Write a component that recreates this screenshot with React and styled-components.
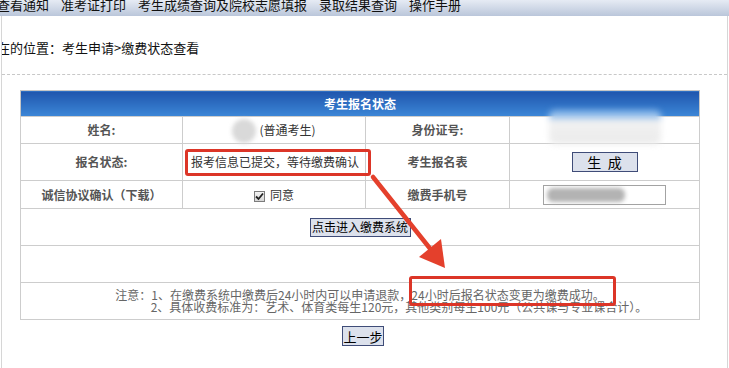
import React from "react";
import styled, { createGlobalStyle } from "styled-components";

const Global = createGlobalStyle`
  body {
    margin: 0;
    background: #fff;
    font-family: "Noto Sans CJK SC", "Noto Sans", sans-serif;
  }
`;

const Nav = styled.div`
  height: 16px;
  background: linear-gradient(#e6ebf4, #bac6da);
  display: flex;
  align-items: flex-end;
  gap: 12px;
  overflow: hidden;
  padding: 0 0 5px 0;
  box-sizing: border-box;
  margin-left: -3px;
`;

const NavItem = styled.span`
  font-size: 13px;
  line-height: 13px;
  color: #111;
  white-space: nowrap;
`;

const Frame = styled.div`
  margin: 0 1px;
  border-left: 1px solid #d6d6d6;
  border-right: 1px solid #d6d6d6;
  padding-bottom: 24px;
  overflow: hidden;
`;

const Crumb = styled.div`
  margin-top: 24px;
  font-size: 13px;
  line-height: 16px;
  color: #111;
  text-indent: -5px;
  padding-bottom: 18px;
  border-bottom: 1px dashed #c8c8c8;
`;

const Section = styled.div`
  position: relative;
  width: 679px;
  margin: 15px 0 0 18px;
`;

const Table = styled.table`
  width: 679px;
  table-layout: fixed;
  border-collapse: collapse;
  border: 1px solid #c6c6c6;
  font-size: 12px;
`;

const HeadCell = styled.th`
  height: 25px;
  padding: 0;
  background: linear-gradient(#1f55ad, #3c87d7);
  color: #fff;
  font-weight: bold;
  font-size: 12px;
  text-align: center;
`;

const Row = styled.tr`
  height: ${(p) => p.$h}px;
`;

const Cell = styled.td`
  border: 1px solid #cdcdcd;
  padding: 0;
  text-align: ${(p) => (p.$left ? "left" : "center")};
  color: ${(p) => (p.$label ? "#555" : "#333")};
  font-weight: ${(p) => (p.$label ? "bold" : "normal")};
  white-space: nowrap;
  vertical-align: middle;
  line-height: 16px;
`;

const Blob = styled.span`
  display: inline-block;
  vertical-align: middle;
  width: ${(p) => p.$w}px;
  height: ${(p) => p.$hh}px;
  border-radius: ${(p) => (p.$round ? "50%" : "6px")};
  background: ${(p) => p.$bg};
  filter: blur(${(p) => p.$blur}px);
  margin: ${(p) => p.$my || 0}px ${(p) => p.$mr || 0}px ${(p) => p.$my || 0}px 0;
  transform: translateY(${(p) => p.$dy || 0}px);
`;

const Highlight = styled.span`
  display: inline-block;
  margin-left: 2px;
  margin-right: -6px;
  padding: 3px 9px 4px 3px;
  border: 3px solid #dc3527;
  border-radius: 3px;
  line-height: 14px;
  color: #333;
`;

const Button = styled.button`
  font-family: "Noto Sans CJK SC", sans-serif;
  font-size: ${(p) => p.$fs || 12}px;
  line-height: 1;
  color: #000;
  background: #dce1ec;
  border: 1px solid #3f4c78;
  width: ${(p) => p.$w}px;
  height: ${(p) => p.$h}px;
  padding: 0;
  white-space: pre;
  vertical-align: middle;
`;

const Check = styled.span`
  display: inline-flex;
  align-items: center;
  justify-content: center;
  width: 11px;
  height: 11px;
  box-sizing: border-box;
  border: 1px solid #7c7c7c;
  background: linear-gradient(#f4f4f4, #d6d6d6);
  vertical-align: middle;
  margin-right: 5px;
`;

const Field = styled.span`
  display: inline-flex;
  align-items: center;
  width: 123px;
  height: 20px;
  box-sizing: border-box;
  border: 1px solid #a3a3a3;
  padding-left: 3px;
  vertical-align: middle;
`;

const Notes = styled.td`
  border: 1px solid #cdcdcd;
  padding: 0;
  color: #666;
  font-size: 12px;
  line-height: 12px;
  text-align: center;
  white-space: nowrap;
`;

const NoteLine = styled.div`
  padding-left: ${(p) => p.$indent || 0}px;
`;

const Overlay = styled.svg`
  position: absolute;
  left: 0;
  top: 0;
  pointer-events: none;
`;

const NoteMark = styled.div`
  position: absolute;
  left: 389px;
  top: 186px;
  width: 207px;
  height: 30px;
  box-sizing: border-box;
  border: 3px solid #dc3527;
  border-radius: 3px;
  pointer-events: none;
`;

const Footer = styled.div`
  display: flex;
  justify-content: center;
  margin-top: 6px;
  padding-right: 3px;
`;

const navItems = [
  "查看通知",
  "准考证打印",
  "考生成绩查询及院校志愿填报",
  "录取结果查询",
  "操作手册",
];

export default function App() {
  return (
    <>
      <Global />
      <Nav>
        {navItems.map((t) => (
          <NavItem key={t}>{t}</NavItem>
        ))}
      </Nav>
      <Frame>
        <Crumb>在的位置：考生申请&gt;缴费状态查看</Crumb>
        <Section>
          <Table>
            <colgroup>
              <col style={{ width: 162 }} />
              <col style={{ width: 183 }} />
              <col style={{ width: 144 }} />
              <col style={{ width: 190 }} />
            </colgroup>
            <thead>
              <tr>
                <HeadCell colSpan={4}>考生报名状态</HeadCell>
              </tr>
            </thead>
            <tbody>
              <Row $h={27}>
                <Cell $label>姓名:</Cell>
                <Cell>
                  <Blob $w={24} $hh={24} $my={-5} $round $bg="#d9d9d9" $blur={2} $mr={3} />
                  (普通考生)
                </Cell>
                <Cell $label>身份证号:</Cell>
                <Cell>
                  <Blob
                    $w={112}
                    $hh={34}
                    $my={-10}
                    $dy={-4}
                    $bg="linear-gradient(#7fb0e6 0%, #9cc3ec 22%, #f2f2f2 30%, #ebebeb 100%)"
                    $blur={3}
                  />
                </Cell>
              </Row>
              <Row $h={37}>
                <Cell $label>报名状态:</Cell>
                <Cell $left>
                  <Highlight>报考信息已提交，等待缴费确认</Highlight>
                </Cell>
                <Cell $label>考生报名表</Cell>
                <Cell>
                  <Button $w={66} $h={20} $fs={14}>{"生  成"}</Button>
                </Cell>
              </Row>
              <Row $h={28}>
                <Cell $label>诚信协议确认（下载）</Cell>
                <Cell>
                  <Check>
                    <svg width="9" height="9" viewBox="0 0 9 9">
                      <path d="M1 4.5 L3.5 7 L8 1.5" fill="none" stroke="#222" strokeWidth="1.8" />
                    </svg>
                  </Check>
                  同意
                </Cell>
                <Cell $label>缴费手机号</Cell>
                <Cell>
                  <Field>
                    <Blob $w={78} $hh={14} $bg="#b3b3b3" $blur={2} />
                  </Field>
                </Cell>
              </Row>
              <Row $h={37}>
                <Cell colSpan={4}>
                  <Button $w={101} $h={19}>点击进入缴费系统</Button>
                </Cell>
              </Row>
              <Row $h={37}>
                <Cell colSpan={4} />
              </Row>
              <Row $h={37}>
                <Notes colSpan={4}>
                  <NoteLine>
                    注意：1、在缴费系统中缴费后24小时内可以申请退款，24小时后报名状态变更为缴费成功。
                  </NoteLine>
                  <NoteLine $indent={78}>
                    2、具体收费标准为：艺术、体育类每生120元，其他类别每生100元（公共课与专业课合计）。
                  </NoteLine>
                </Notes>
              </Row>
            </tbody>
          </Table>
          <Overlay width="679" height="235" viewBox="0 0 679 235">
            <line x1="353" y1="87" x2="412" y2="161" stroke="#e4402c" strokeWidth="4.5" strokeLinecap="round" />
            <polygon points="399,167 421,149 425,178" fill="#e4402c" />
          </Overlay>
          <NoteMark />
        </Section>
        <Footer>
          <Button $w={42} $h={20} $fs={13}>上一步</Button>
        </Footer>
      </Frame>
    </>
  );
}
